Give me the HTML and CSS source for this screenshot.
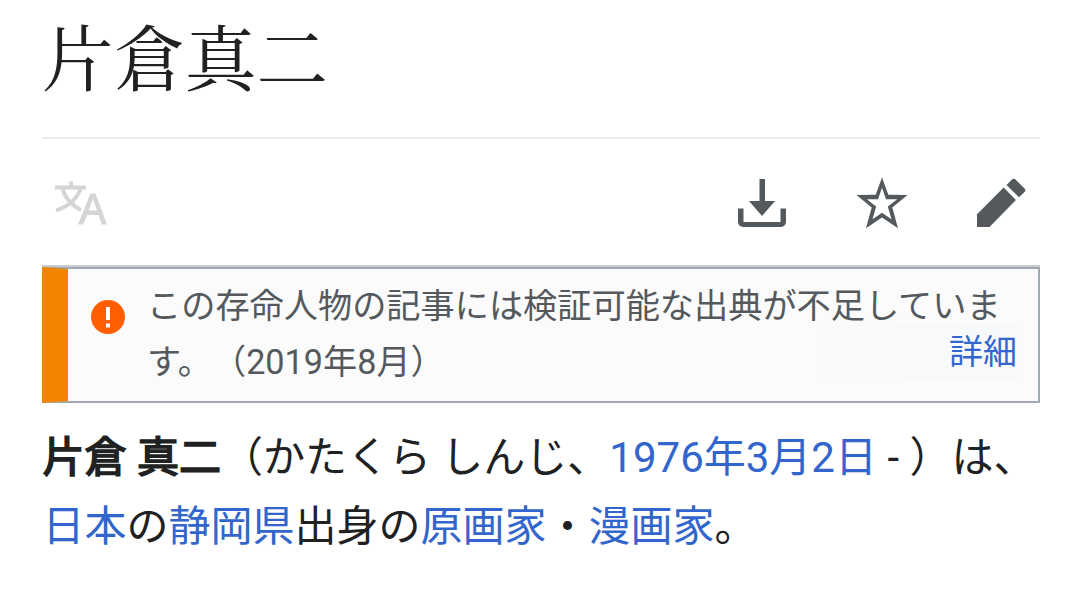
FILE: index.html
```
<!DOCTYPE html>
<html lang="ja">

<head>
    <meta charset="UTF-8">
    <meta name="viewport" content="width=device-width, initial-scale=1.0">
    <title>片倉真二</title>
    <link rel="stylesheet" href="styles.css">
</head>

<body>
    <div id="wrap">
        <h1 class="heading">片倉真二</h1>
        <ul class="actions">
            <li class="language">
                <svg width="60" height="60" viewBox="0 0 60 60">
                    <path d="M13 14.500h31M28.500 8.500l1.500 6M20.500 15.500c2 8.500 9 17 18.500 21.500M38.500 15.500c-2.500 9-11.500 18-24.500 22" fill="none" stroke="#d3d5d7" stroke-width="4"/>
                    <path d="M36 51.500L48.500 20.500h5L65 51.500h-5.200l-3.200-9.500H45l-3.700 9.500zM46.500 37.500h8.500L51 26z" fill="#d3d5d7"/>
                </svg>
            </li>
            <li>
                <svg width="60" height="60" viewBox="0 0 60 60">
                    <path d="M27.500 6h5.500v22h10L30 43 17 28h10.500z"/>
                    <path d="M6 35.500h5.500V49h37V35.500H54V49a5 5 0 0 1-5 5H11a5 5 0 0 1-5-5z"/>
                </svg>
            </li>
            <li>
                <svg width="60" height="60" viewBox="0 0 60 60">
                    <path fill-rule="evenodd" d="M30 4.500l6.300 17.300 19.200.2-15.200 12.500L46 55.200 30 44.500 14 55.200l5.700-20.700L4.500 22l19.200-.2zM30 14.800l-4 11.400H14.800l9.400 7.300-3.700 12.700L30 39.800l9.500 6.400-3.700-12.700 9.400-7.300H34z"/>
                </svg>
            </li>
            <li>
                <svg width="60" height="60" viewBox="0 0 60 60">
                    <path d="M6 54V41.300L32.700 14.600 44.900 27 18.500 54z"/>
                    <path d="M35.500 12L41 6.500a2.500 2.500 0 0 1 3.500 0l9 9a2.500 2.500 0 0 1 0 3.500L48 24.300z"/>
                </svg>
            </li>
        </ul>
        <div class="notice">
            <svg class="alert" width="34" height="34" viewBox="0 0 34 34">
                <circle cx="17" cy="17" r="17" fill="#ff5d00"/>
                <path d="M15 7h4v13h-4zM15 23.500h4v4h-4z" fill="#fff"/>
            </svg>
            <p class="message">この存命人物の記事には検証可能な出典が不足しています。（2019年8月）</p>
            <a class="more">詳細</a>
        </div>
        <p class="content"><b>片倉 真二</b>（かたくら しんじ、<a>1976年3月2日</a> - ）は、<br><a>日本</a>の<a>静岡県</a>出身の<a>原画家</a>・<a>漫画家</a>。</p>
    </div>
</body>

</html>
```
FILE: styles.css
```
* {
    margin: 0;
    padding: 0;
    box-sizing: border-box;
}

ul, li {
    list-style: none;
}

body {
    background: #fff;
    color: #202122;
    font-family: Roboto, "Noto Sans CJK JP", sans-serif;
    text-spacing-trim: space-all;
    overflow: hidden;
}

a {
    color: #3366cc;
}

#wrap {
    width: 998px;
    margin-left: 42px;
}

.heading {
    height: 139px;
    padding-top: 4px;
    border-bottom: 2px solid #eaecf0;
    font-family: "Noto Serif CJK JP", "Noto Serif JP", serif;
    font-size: 71.500px;
    font-weight: normal;
    line-height: 100px;
}

.actions {
    display: flex;
    align-items: center;
    gap: 59.500px;
    height: 128px;
    padding: 1px 9px 0 0;
    border-bottom: 2px solid #c8ccd1;
}

.actions svg {
    display: block;
    width: 60px;
    height: 60px;
    fill: #54595d;
    overflow: visible;
}

.actions .language {
    margin-right: auto;
}

.notice {
    position: relative;
    display: flex;
    height: 136px;
    border: 2px solid #a2a9b1;
    border-left: 26px solid #f28500;
    background: #fbfbfb;
}

.alert {
    flex: none;
    margin: 31px 22px 0 23px;
}

.message {
    width: 864px;
    padding-top: 9px;
    color: #54595d;
    font-size: 34.200px;
    line-height: 56px;
    line-break: anywhere;
}

/* link sits over the end of the second line */
.more {
    position: absolute;
    right: 21px;
    bottom: 21px;
    width: 200px;
    height: 56px;
    background: linear-gradient(to right, #fbfbfb, #f8f9fa 50%);
    font-size: 34px;
    line-height: 56px;
    text-align: right;
}

.content {
    padding: 20px 0 0 0.5px;
    font-size: 42px;
    line-height: 69px;
    white-space: nowrap;
}

.content b {
    font-weight: normal;
    -webkit-text-stroke: 1.700px #202122;
}
```
